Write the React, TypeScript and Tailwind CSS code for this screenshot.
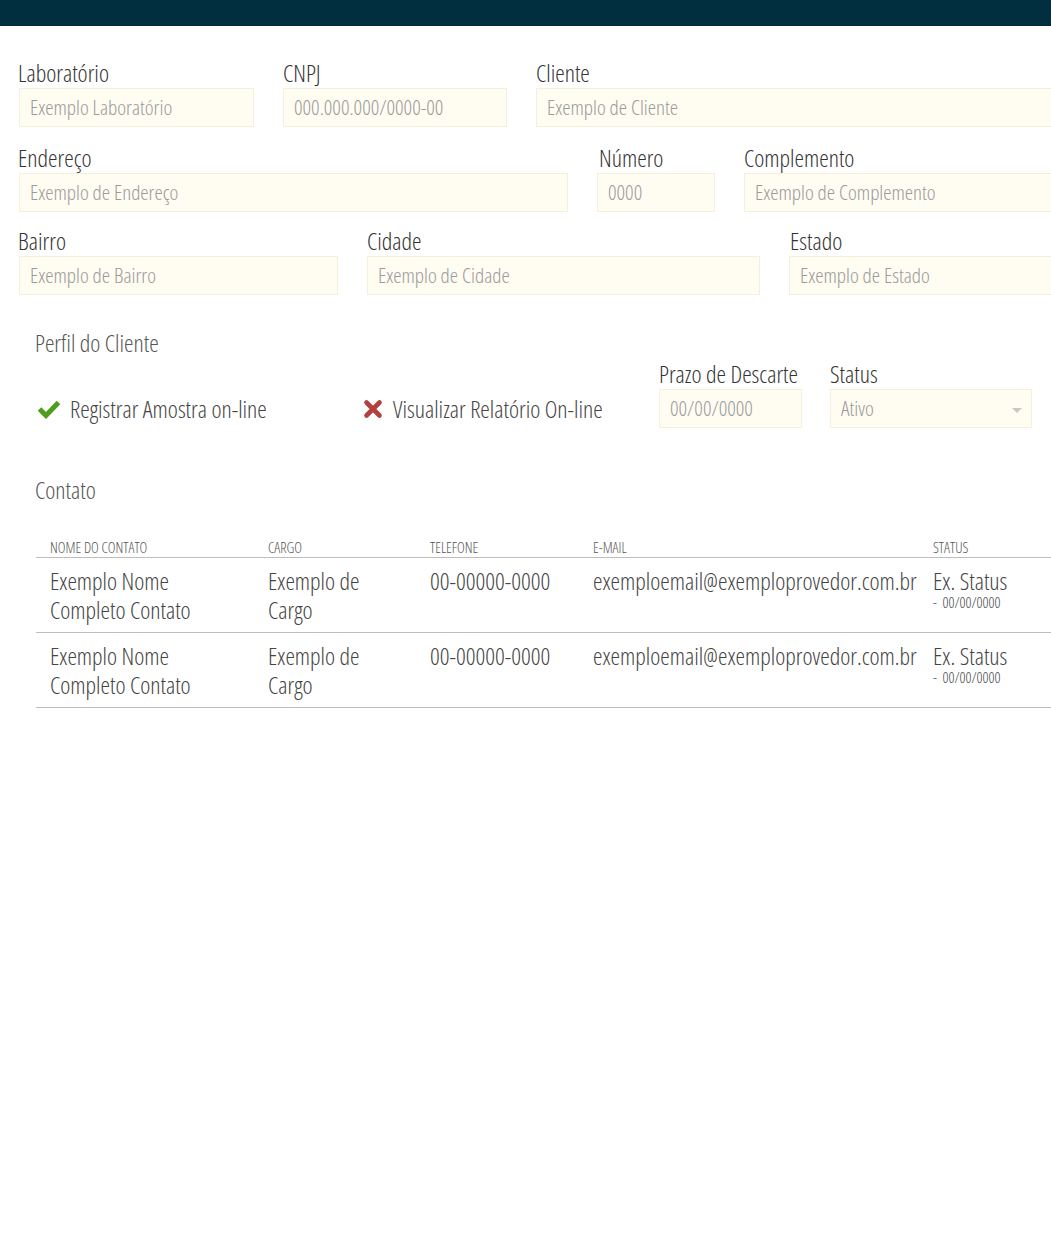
const font = "font-['Open_Sans','DejaVu_Sans_Condensed',sans-serif] font-light [font-stretch:condensed]";

type FieldProps = { label: string; placeholder: string; width: string; labelOffset?: string; select?: boolean };

function Field({ label, placeholder, width, labelOffset, select }: FieldProps) {
  return (
    <div className={`flex shrink-0 flex-col ${width}`}>
      <label className={`h-[25px] text-[24px] leading-[20px] text-[#333] ${labelOffset ?? ''}`}>{label}</label>
      <div className="relative flex h-[39px] items-center border border-[#f6efdc] bg-[#fffcf2] px-[10px] text-[21px] text-[#9a9a9a]">
        {placeholder}
        {select && (
          <span className="absolute right-[9px] top-[18px] h-0 w-0 border-x-[5px] border-t-[5px] border-x-transparent border-t-[#c8c8c8]" />
        )}
      </div>
    </div>
  );
}

function CheckIcon() {
  return (
    <svg width="24" height="20" viewBox="0 0 24 20" className="shrink-0">
      <polyline points="2.5,10 9,16.5 21.5,3.5" fill="none" stroke="#4f9d1f" strokeWidth="5" strokeLinejoin="miter" />
    </svg>
  );
}

function CrossIcon() {
  return (
    <svg width="20" height="20" viewBox="0 0 20 20" className="shrink-0">
      <path d="M3.5 3.5 L16.5 16.5 M16.5 3.5 L3.5 16.5" fill="none" stroke="#b3403f" strokeWidth="4.6" strokeLinecap="round" />
    </svg>
  );
}

const CONTACTS = [
  { name: ['Exemplo Nome', 'Completo Contato'], cargo: ['Exemplo de', 'Cargo'] },
  { name: ['Exemplo Nome', 'Completo Contato'], cargo: ['Exemplo de', 'Cargo'] },
];

const COLS = 'grid grid-cols-[218px_162px_163px_340px_1fr]';

export default function App() {
  return (
    <div className={`min-h-[1235px] w-full overflow-hidden bg-white ${font}`}>
      <div className="h-[26px] bg-[#022f40]" />

      <div className="pl-[19px] pt-[37px]">
        {/* endereço */}
        <div className="flex gap-[29px]">
          <Field label="Laboratório" placeholder="Exemplo Laboratório" width="w-[235px]" labelOffset="-ml-[1px]" />
          <Field label="CNPJ" placeholder="000.000.000/0000-00" width="w-[224px]" />
          <Field label="Cliente" placeholder="Exemplo de Cliente" width="w-[560px]" />
        </div>
        <div className="mt-[21px] flex gap-[29px]">
          <Field label="Endereço" placeholder="Exemplo de Endereço" width="w-[549px]" labelOffset="-ml-[1px]" />
          <Field label="Número" placeholder="0000" width="w-[118px]" labelOffset="pl-[2px]" />
          <Field label="Complemento" placeholder="Exemplo de Complemento" width="w-[400px]" />
        </div>
        <div className="mt-[19px] flex gap-[29px]">
          <Field label="Bairro" placeholder="Exemplo de Bairro" width="w-[319px]" labelOffset="-ml-[1px]" />
          <Field label="Cidade" placeholder="Exemplo de Cidade" width="w-[393px]" />
          <Field label="Estado" placeholder="Exemplo de Estado" width="w-[400px]" labelOffset="pl-[1px]" />
        </div>
      </div>

      {/* perfil */}
      <div className="pl-[35px] pt-[33px]">
        <h3 className="text-[24px] leading-[30px] text-[#555]">Perfil do Cliente</h3>
        <div className="mt-[6px] flex items-end">
          <div className="flex h-[39px] w-[328px] items-center gap-[9px] pl-[2px] text-[24px] text-[#444]">
            <CheckIcon />
            Registrar Amostra on-line
          </div>
          <div className="flex h-[39px] w-[296px] items-center gap-[10px] text-[24px] text-[#444]">
            <CrossIcon />
            Visualizar Relatório On-line
          </div>
          <div className="flex gap-[28px]">
            <Field label="Prazo de Descarte" placeholder="00/00/0000" width="w-[143px]" />
            <Field label="Status" placeholder="Ativo" width="w-[202px]" select />
          </div>
        </div>

        <h3 className="mt-[47px] text-[24px] leading-[30px] text-[#555]">Contato</h3>

        <div className="ml-[1px] mt-[31px] w-[1100px] text-[#444]">
          <div className={`${COLS} h-[22px] items-center border-b border-[#bdbdbd] px-[14px] text-[14.7px] uppercase text-[#555]`}>
            <span>Nome do Contato</span>
            <span>Cargo</span>
            <span>Telefone</span>
            <span>E-mail</span>
            <span>Status</span>
          </div>
          {CONTACTS.map((c, i) => (
            <div key={i} className={`${COLS} border-b border-[#bdbdbd] px-[14px] pb-[8px] pt-[8px] text-[24px] leading-[29px]`}>
              <div>{c.name[0]}<br />{c.name[1]}</div>
              <div>{c.cargo[0]}<br />{c.cargo[1]}</div>
              <div>00-00000-0000</div>
              <div>exemploemail@exemploprovedor.com.br</div>
              <div>
                Ex. Status
                <div className="text-[14.7px] leading-[14px]">-&nbsp; 00/00/0000</div>
              </div>
            </div>
          ))}
        </div>
      </div>
    </div>
  );
}
